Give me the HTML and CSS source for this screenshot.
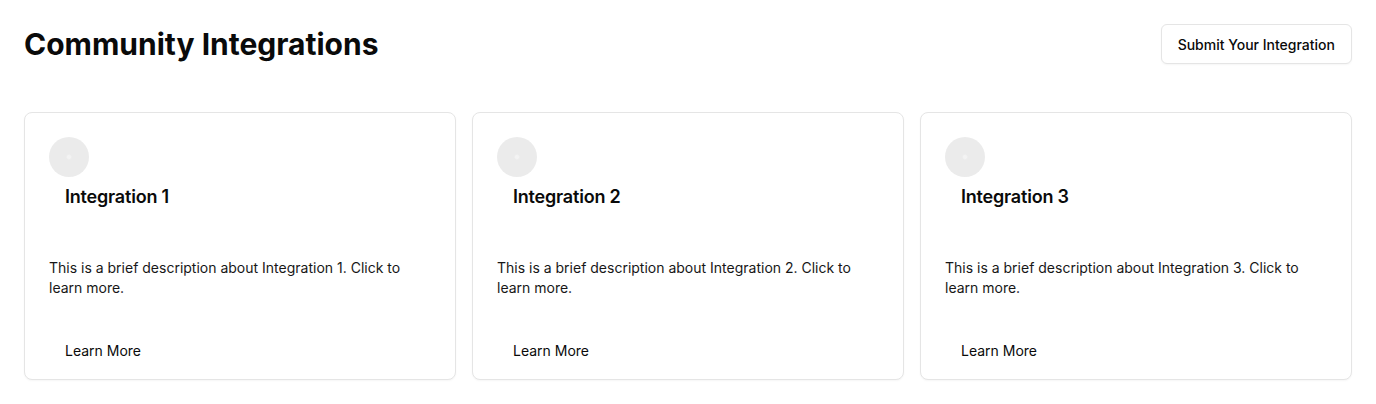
FILE: index.html
```html
<!DOCTYPE html>
<html lang="en">
<head>
<meta charset="utf-8">
<title>Community Integrations</title>
<link rel="stylesheet" href="styles.css">
</head>
<body>
<main class="page">
  <header class="header">
    <h1 class="title">Community Integrations</h1>
    <button class="btn-outline">Submit Your Integration</button>
  </header>
  <section class="grid">
    <article class="card">
      <div class="avatar"></div>
      <h3 class="card-title">Integration 1</h3>
      <p class="card-desc">This is a brief description about Integration 1. Click to learn more.</p>
      <button class="btn-ghost">Learn More</button>
    </article>
    <article class="card">
      <div class="avatar"></div>
      <h3 class="card-title">Integration 2</h3>
      <p class="card-desc">This is a brief description about Integration 2. Click to learn more.</p>
      <button class="btn-ghost">Learn More</button>
    </article>
    <article class="card">
      <div class="avatar"></div>
      <h3 class="card-title">Integration 3</h3>
      <p class="card-desc">This is a brief description about Integration 3. Click to learn more.</p>
      <button class="btn-ghost">Learn More</button>
    </article>
  </section>
</main>
</body>
</html>
```

FILE: styles.css
```css
* { box-sizing: border-box; }
html, body { margin: 0; padding: 0; background: #ffffff; }
body {
  font-family: Inter, "Liberation Sans", sans-serif;
  color: #0a0a0a;
}
.page { padding: 24px; }
.header {
  display: flex;
  justify-content: space-between;
  align-items: flex-start;
}
.title {
  margin: 0;
  padding-top: 2px;
  font-size: 30px;
  line-height: 36px;
  font-weight: 700;
}
.btn-outline {
  height: 40px;
  padding: 0 16px;
  border: 1px solid #e5e5e5;
  border-radius: 6px;
  background: #ffffff;
  font-family: inherit;
  font-size: 14px;
  font-weight: 500;
  color: #0a0a0a;
  box-shadow: 0 1px 2px rgba(0,0,0,0.04);
}
.grid {
  margin-top: 48px;
  display: grid;
  grid-template-columns: repeat(3, 1fr);
  gap: 16px;
}
.card {
  display: flex;
  flex-direction: column;
  align-items: flex-start;
  border: 1px solid #e5e5e5;
  border-radius: 8px;
  padding: 24px 24px 9px;
  background: #ffffff;
  box-shadow: 0 1px 2px rgba(0,0,0,0.04);
}
.avatar {
  width: 40px;
  height: 40px;
  border-radius: 50%;
  background: radial-gradient(circle at center, #f3f3f3 0, #f3f3f3 1.5px, #ebebeb 3px);
}
.card-title {
  margin: 6px 0 0;
  padding: 0 16px;
  font-size: 18px;
  line-height: 28px;
  font-weight: 600;
  letter-spacing: -0.2px;
}
.card-desc {
  margin: 47px 0 0;
  font-size: 14px;
  line-height: 20px;
  color: #171717;
}
.btn-ghost {
  margin-top: 32px;
  height: 40px;
  padding: 0 16px;
  border: 0;
  background: transparent;
  font-family: inherit;
  font-size: 14px;
  font-weight: 400;
  color: #0a0a0a;
}
```
